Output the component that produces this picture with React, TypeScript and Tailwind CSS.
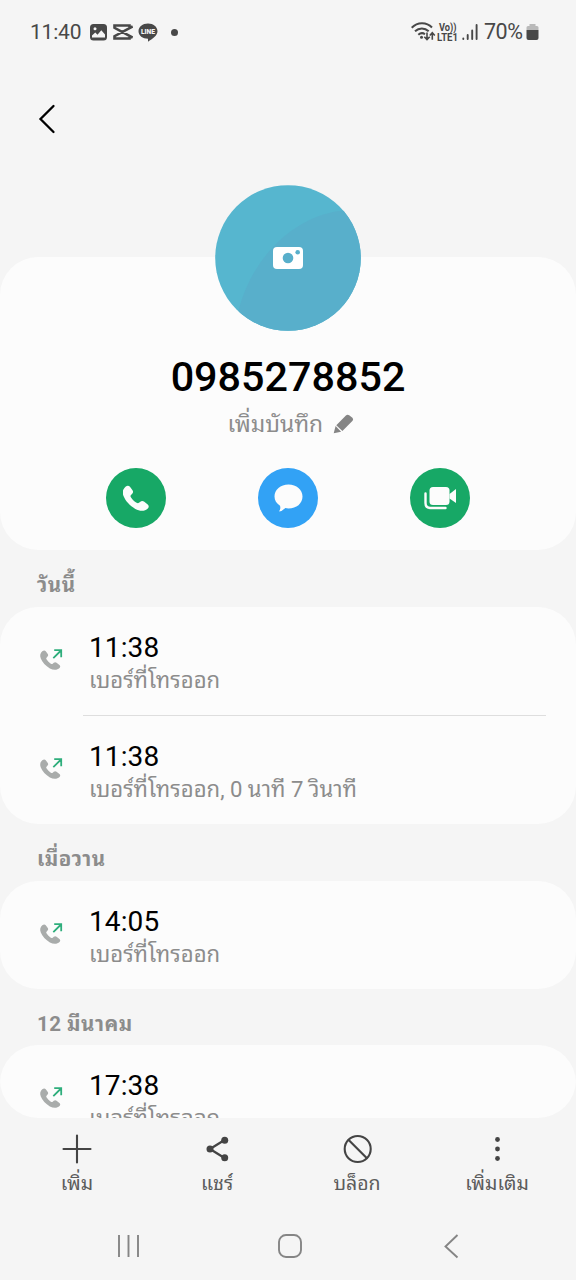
import React from "react";

const callGroups = [
  {
    label: "วันนี้",
    calls: [
      { time: "11:38", desc: "เบอร์ที่โทรออก" },
      { time: "11:38", desc: "เบอร์ที่โทรออก, 0 นาที 7 วินาที" },
    ],
  },
  { label: "เมื่อวาน", calls: [{ time: "14:05", desc: "เบอร์ที่โทรออก" }] },
  { label: "12 มีนาคม", calls: [{ time: "17:38", desc: "เบอร์ที่โทรออก" }] },
];

const handset =
  "M3.200 1C4.500-.2 6.200-.1 7.200 1.200l2.300 3c1 1.300.9 2.600-.1 3.700L8.200 9.200c-.6.700-.6 1.300-.1 2.100 1.500 2.300 3.300 4 5.500 5.400.9.6 1.600.6 2.300 0l1.300-1.100c1.100-1 2.400-1 3.500-.1l3.600 2.800c1.300 1 1.300 2.600.1 3.800-2.800 2.800-7.500 3-12 .5C7 19.500 2.900 15 1 10.200-.6 6.200.4 3.400 3.200 1Z";

function StatusBar() {
  return (
    <div className="flex h-16 shrink-0 items-center justify-between pl-[30px] pr-[37px] text-[#484848]">
      <div className="flex items-center">
        <span className="w-[59px] text-[21px] leading-none tracking-[-0.200px]">11:40</span>
        <svg width="18" height="18" viewBox="0 0 18 18" className="mr-[6px]">
          <rect x="1" y="1" width="17" height="16.500" rx="3.500" fill="currentColor" />
          <path d="M3 14.500v-2l3.300-3 2.200 2.200 3.800-4.500 3.700 4.300v3Z" fill="#f5f5f5" />
          <circle cx="6" cy="5.700" r="1.500" fill="#f5f5f5" />
        </svg>
        <svg width="20" height="18" viewBox="0 0 20 18" className="mr-[5px]" fill="none" stroke="currentColor" strokeWidth="2.600">
          <path d="M16.500 5V2.500H1.500v2.300L19.700 14.500M16.500 13v2.500H1.500v-2.300L19.700 3.500" />
        </svg>
        <svg width="20" height="19" viewBox="0 0 20 19" className="mr-[13px]">
          <path d="M10 .5c5.300 0 9.500 3.400 9.500 7.700 0 4.500-5 7.500-9.500 10.500v-3C4.700 15.700.5 12.600.5 8.200S4.700.5 10 .5Z" fill="currentColor" />
          <text x="10" y="10.800" textAnchor="middle" fontSize="6.800" fontWeight="900" fill="#f5f5f5" textLength="14" lengthAdjust="spacingAndGlyphs">LINE</text>
        </svg>
        <span className="size-[7px] rounded-full bg-[#484848]" />
      </div>
      <div className="flex items-center">
        <svg width="26" height="22" viewBox="0 0 26 22" fill="none" stroke="currentColor" strokeWidth="2">
          <path d="M.7 6.800C6.500.8 15.500.8 21 6.500M4 10.300c4-3.800 9.700-3.800 13.700 0M7.300 13.800c2-1.800 4.700-2 6.700-.6" />
          <circle cx="10.500" cy="16.300" r="1.500" fill="currentColor" stroke="none" />
          <path d="M16 11.500v6.800M13.300 15.700l2.700 2.800 2.700-2.800M21.300 18.800V12M18.800 14.500l2.500-2.700 2.500 2.700" strokeWidth="1.600" />
        </svg>
        <svg width="23" height="22" viewBox="0 0 23 22" fill="currentColor" fontWeight="700">
          <text x="2" y="9.800" fontSize="10.500" textLength="17.500" lengthAdjust="spacingAndGlyphs">Vo))</text>
          <text x="0" y="19.500" fontSize="11" textLength="21" lengthAdjust="spacingAndGlyphs">LTE1</text>
        </svg>
        <svg width="16" height="18" viewBox="0 0 16 18" className="ml-[2px] mr-[6px]" stroke="currentColor" strokeWidth="1.900" strokeLinecap="round">
          <path d="M1.300 15.500v.5M5.700 12v4M10.200 7.500V16M14.600 2v14" />
        </svg>
        <span className="w-[42px] text-[21.500px] leading-none tracking-[-0.500px]">70%</span>
        <svg width="13" height="18" viewBox="0 0 13 18">
          <path d="M3.500 1h6v2H11q1.500 0 1.500 1.500V7H.5V4.500Q.5 3 2 3h1.500Z" fill="#b9b9b9" />
          <path d="M.5 7h12v8q0 2-2 2h-8q-2 0-2-2Z" fill="currentColor" />
        </svg>
      </div>
    </div>
  );
}

function Profile() {
  return (
    <div className="flex h-[293px] shrink-0 flex-col items-center rounded-[38px] bg-[#fcfcfc]">
      <svg width="146" height="146" viewBox="0 0 146 146" className="-mt-[72px] shrink-0">
        <defs>
          <clipPath id="avatar">
            <circle cx="73" cy="73" r="72.800" />
          </clipPath>
        </defs>
        <g clipPath="url(#avatar)">
          <rect width="146" height="146" fill="#56b6cf" />
          <path d="M23 128C35 75 78 29 132 25h14v121H23Z" fill="#58afcb" />
        </g>
        <rect x="58" y="62" width="30" height="22" rx="4" fill="#fff" />
        <circle cx="73" cy="73" r="5.300" fill="#58afcb" />
        <circle cx="82.700" cy="67.300" r="2.300" fill="#58afcb" />
      </svg>
      <h1 className="mt-[24px] h-[44px] text-[41.300px] leading-[44px] font-medium text-black">0985278852</h1>
      <div className="mt-[10px] ml-[5px] flex h-[32px] items-center gap-[10px] text-[22.800px] leading-[32px] text-[#8c8c8c]">
        <span className="w-[95px] whitespace-nowrap">เพิ่มบันทึก</span>
        <svg width="21" height="20" viewBox="0 0 21 20" fill="#858585" className="-mt-[3px]">
          <path d="M12.900 1.500q1.600-1.500 3.300-.2l3.200 2.500q1.400 1.300.2 2.900L9.400 17 3.300 11.200ZM2.600 12l5.500 5.800L.7 19.200Z" />
        </svg>
      </div>
      <div className="mt-[27px] flex gap-[92px]">
        <button className="grid size-[60px] place-items-center rounded-full bg-[#17a866]">
          <svg width="27" height="27" viewBox="0.500 0 26 25" fill="#fcfcfc">
            <path d={handset} />
          </svg>
        </button>
        <button className="grid size-[60px] place-items-center rounded-full bg-[#32a2f5]">
          <svg width="29" height="28" viewBox="0 0 29 28" fill="#fcfcfc">
            <path d="M14.500.5c8 0 14 5 14 12s-6 12-14 12q-1.700 0-3.200-.4Q8 27.500 5 27.500q2-2.500 1-5.800C2.500 19.500.5 16.300.5 12.500.5 5.500 6.500.5 14.500.5Z" />
          </svg>
        </button>
        <button className="grid size-[60px] place-items-center rounded-full bg-[#17a866]">
          <svg width="33" height="24" viewBox="0.500 0 33 24" fill="#fcfcfc">
            <rect x="6" y="1" width="20" height="18" rx="3.500" />
            <path d="M26 8 32.500 3v14L26 12.500Z" />
            <path d="M2 7.500V17q0 5 5 5h15" fill="none" stroke="#fcfcfc" strokeWidth="2.400" strokeLinecap="round" />
          </svg>
        </button>
      </div>
    </div>
  );
}

function CallRow({ call, divided }: { call: { time: string; desc: string }; divided: boolean }) {
  return (
    <div className={"flex pl-[39px] pr-[30px] " + (divided ? "h-[109.500px]" : "h-[108px]")}>
      <svg width="25" height="25" viewBox="0 0 25 25" className="mt-[40px] shrink-0">
        <path d={handset} fill="#a9acab" transform="translate(1 3.300) scale(.8 .8)" />
        <path d="M14.300 11.200 22 3.500M15.200 3.200h7v7" fill="none" stroke="#2fae7c" strokeWidth="1.800" />
      </svg>
      <div className={"ml-[19px] flex-1 pl-[6px] pt-[24px] " + (divided ? "border-b border-[#dedede]" : "")}>
        <p className="h-[33px] text-[28px] leading-[34px] tracking-[0.100px] text-black">{call.time}</p>
        <p className="h-[32px] whitespace-nowrap text-[22.100px] leading-[32px] text-[#8c8c8c]">{call.desc}</p>
      </div>
    </div>
  );
}

function Toolbar() {
  const items = [
    { label: "เพิ่ม", icon: <path d="M15 1.500v27M1.500 15h27" strokeWidth="2.100" /> },
    {
      label: "แชร์",
      icon: (
        <>
          <path d="M22.500 6 8 15l14.500 9" strokeWidth="2.300" />
          <g fill="#444" stroke="none">
            <circle cx="22.700" cy="6.200" r="3.500" />
            <circle cx="8" cy="15" r="3.500" />
            <circle cx="22.700" cy="23.800" r="3.500" />
          </g>
        </>
      ),
    },
    {
      label: "บล็อก",
      icon: (
        <>
          <circle cx="15.700" cy="15" r="13" strokeWidth="2.100" />
          <path d="m6.700 6 18 18" strokeWidth="2.100" />
        </>
      ),
    },
    {
      label: "เพิ่มเติม",
      icon: (
        <g fill="#444" stroke="none">
          <circle cx="15.500" cy="5.500" r="2.400" />
          <circle cx="15.500" cy="15" r="2.400" />
          <circle cx="15.500" cy="24.500" r="2.400" />
        </g>
      ),
    },
  ];

  return (
    <div className="flex h-[94px] shrink-0 px-[7px] pt-[16px]">
      {items.map((item) => (
        <button key={item.label} className="flex w-[140px] flex-col items-center text-[#5c5c5c]">
          <svg width="30" height="30" viewBox="0 0 30 30" fill="none" stroke="#444" strokeLinecap="round">
            {item.icon}
          </svg>
          <span className="mt-[5px] whitespace-nowrap text-[19.500px] leading-[30px]">{item.label}</span>
        </button>
      ))}
    </div>
  );
}

function NavBar() {
  return (
    <div className="flex h-[68px] shrink-0 items-center justify-between pl-[116px] pr-[112px] text-[#858585]">
      <svg width="26" height="26" viewBox="0 0 26 26" fill="none" stroke="currentColor" strokeWidth="1.900">
        <path d="M3 2v22M12.500 2v22M22 2v22" />
      </svg>
      <svg width="26" height="26" viewBox="0 0 26 26" fill="none" stroke="currentColor" strokeWidth="1.900">
        <rect x="2" y="2" width="22" height="22" rx="7" />
      </svg>
      <svg width="26" height="26" viewBox="0 0 26 26" fill="none" stroke="currentColor" strokeWidth="1.900">
        <path d="M19.500 2 7.500 13.500l12 11" />
      </svg>
    </div>
  );
}

export default function App() {
  return (
    <div className="flex h-[1280px] w-[576px] flex-col overflow-hidden bg-[#f5f5f5] font-['Roboto','Droid_Sans_Thai','Noto_Sans_Thai_Looped','Loma','Garuda','Waree',sans-serif]">
      <StatusBar />
      <div className="h-[193px] shrink-0 pl-[38px] pt-[40px]">
        <svg width="20" height="30" viewBox="0 0 20 30" fill="none" stroke="#000" strokeWidth="2.300" strokeLinecap="round">
          <path d="M15.500 2 2.500 15l13 13" />
        </svg>
      </div>
      <Profile />
      {/* Lịch sử cuộc gọi */}
      <div className="h-[568px] shrink-0 overflow-hidden rounded-b-[38px]">
        {callGroups.map((group) => (
          <section key={group.label}>
            <h2 className="h-[56.500px] pl-[37px] pt-[19px] text-[20.500px] leading-[32px] font-bold tracking-[0.500px] text-[#8c8c8c]">{group.label}</h2>
            <div className="overflow-hidden rounded-[38px] bg-[#fcfcfc]">
              {group.calls.map((call, idx) => (
                <CallRow key={idx} call={call} divided={idx < group.calls.length - 1} />
              ))}
            </div>
          </section>
        ))}
      </div>
      <Toolbar />
      <NavBar />
    </div>
  );
}
